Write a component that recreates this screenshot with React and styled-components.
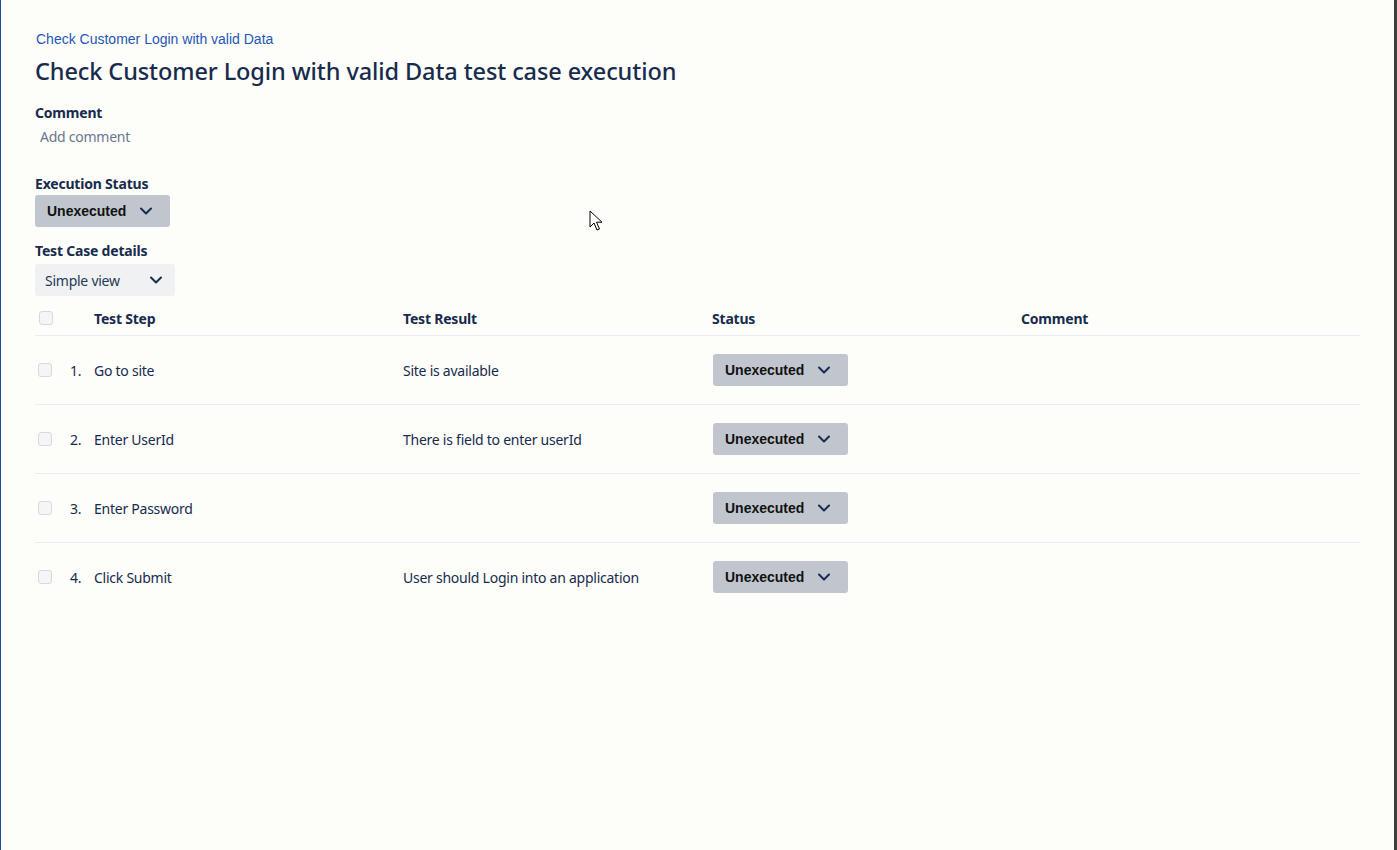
import React from "react";
import styled, { createGlobalStyle } from "styled-components";

const Global = createGlobalStyle`
  html, body { margin: 0; padding: 0; background: #fdfdfa; }
  body { font-family: "Noto Sans", "Open Sans", sans-serif; color: #172b4d; }
`;

const Frame = styled.div`
  position: relative;
  box-sizing: border-box;
  width: 1397px;
  height: 850px;
  background: #fdfdfa;
  border-left: 1px solid #1d4d9c;
  border-right: 3px solid #3b3e39;
  padding: 30px 0 0 34px;
  overflow: hidden;
`;

const Crumb = styled.a`
  display: block;
  font-family: "Liberation Sans", Arial, sans-serif;
  font-size: 14px;
  color: #1f57b5;
  text-decoration: none;
  margin-left: 1px;
  line-height: 18px;
`;

const Title = styled.h1`
  margin: 8px 0 0;
  font-size: 23.5px;
  font-weight: 500;
  line-height: 30px;
  color: #172b4d;
  letter-spacing: -0.1px;
`;

const Label = styled.div`
  font-size: 14px;
  font-weight: 700;
  line-height: 18px;
  color: #172b4d;
  margin-top: ${(p) => p.$top || 0}px;
  letter-spacing: -0.2px;
`;

const Placeholder = styled.div`
  font-size: 14px;
  color: #6b778c;
  line-height: 20px;
  letter-spacing: -0.25px;
  margin: 5px 0 0 5px;
`;

const StatusButton = styled.button`
  display: inline-flex;
  align-items: center;
  box-sizing: border-box;
  width: 135px;
  height: 32px;
  padding: 0 0 0 12px;
  border: none;
  border-radius: 3px;
  background: #c1c6ce;
  font-family: "Liberation Sans", Arial, sans-serif;
  font-weight: 700;
  font-size: 14px;
  color: #111;
  cursor: pointer;
  span { width: 91px; text-align: left; }
`;

const ViewSelect = styled.button`
  display: flex;
  align-items: center;
  box-sizing: border-box;
  width: 140px;
  height: 32px;
  padding: 0 0 0 10px;
  border: none;
  border-radius: 3px;
  background: #f0f1f2;
  font-family: "Noto Sans", sans-serif;
  font-size: 14px;
  letter-spacing: -0.25px;
  color: #253858;
  span { width: 103px; text-align: left; }
`;

const Block = styled.div`
  margin-top: ${(p) => p.$top || 0}px;
`;

const Table = styled.div`
  width: 1325px;
  margin-top: 5px;
`;

const Row = styled.div`
  display: grid;
  grid-template-columns: 30px 29px 309px 309px 309px 1fr;
  align-items: center;
  height: ${(p) => (p.$head ? 34 : 68)}px;
  border-bottom: ${(p) => (p.$last ? "none" : "1px solid #ecedf0")};
  font-size: 14px;
  letter-spacing: -0.25px;
  color: #172b4d;
`;

const HeadCell = styled.div`
  font-weight: 700;
  letter-spacing: -0.2px;
`;

const Cell = styled.div`
  padding-left: ${(p) => p.$pad || 0}px;
`;

const Box = styled.span`
  display: block;
  box-sizing: border-box;
  width: 14px;
  height: 14px;
  margin-left: ${(p) => p.$left || 3}px;
  border: 1.5px solid #d6d9df;
  border-radius: 3px;
  background: #f4f5f7;
`;

const Cursor = styled.svg`
  position: absolute;
  left: 588px;
  top: 210px;
`;

const Chevron = () => (
  <svg width="16" height="16" viewBox="0 0 16 16" fill="none">
    <path d="M3 5.5 8 10.5l5-5" stroke="#172b4d" strokeWidth="2" strokeLinecap="round" strokeLinejoin="round" />
  </svg>
);

const Status = () => (
  <StatusButton>
    <span>Unexecuted</span>
    <Chevron />
  </StatusButton>
);

const steps = [
  { n: "1.", step: "Go to site", result: "Site is available" },
  { n: "2.", step: "Enter UserId", result: "There is field to enter userId" },
  { n: "3.", step: "Enter Password", result: "" },
  { n: "4.", step: "Click Submit", result: "User should Login into an application" },
];

export default function App() {
  return (
    <>
      <Global />
      <Frame>
        <Crumb href="#">Check Customer Login with valid Data</Crumb>
        <Title>Check Customer Login with valid Data test case execution</Title>

        <Label $top={18}>Comment</Label>
        <Placeholder>Add comment</Placeholder>

        <Label $top={28}>Execution Status</Label>
        <Block $top={2}>
          <Status />
        </Block>

        <Label $top={15}>Test Case details</Label>
        <Block $top={4}>
          <ViewSelect>
            <span>Simple view</span>
            <Chevron />
          </ViewSelect>
        </Block>

        <Table>
          <Row $head>
            <Cell><Box $left={4} /></Cell>
            <Cell />
            <HeadCell>Test Step</HeadCell>
            <HeadCell>Test Result</HeadCell>
            <HeadCell>Status</HeadCell>
            <HeadCell>Comment</HeadCell>
          </Row>
          {steps.map((s, i) => (
            <Row key={s.n} $last={i === steps.length - 1}>
              <Cell><Box /></Cell>
              <Cell $pad={5}>{s.n}</Cell>
              <Cell>{s.step}</Cell>
              <Cell>{s.result}</Cell>
              <Cell $pad={1}><Status /></Cell>
              <Cell />
            </Row>
          ))}
        </Table>

        <Cursor width="14" height="22" viewBox="0 0 14 22">
          <path d="M1 1v16l4-4 3 7 2.5-1-3-6.8H13z" fill="#fff" stroke="#000" strokeWidth="1" strokeLinejoin="round" />
        </Cursor>
      </Frame>
    </>
  );
}
